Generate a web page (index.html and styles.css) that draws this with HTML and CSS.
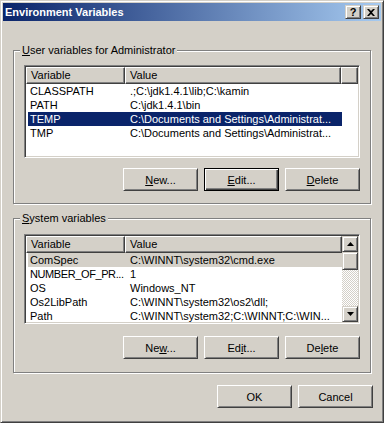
FILE: index.html
```html
<!DOCTYPE html>
<html lang="en">
<head>
  <meta charset="UTF-8">
  <title>Environment Variables</title>
  <link rel="stylesheet" href="styles.css">
</head>
<body>

<div class="window">
  <div class="titlebar">
    <span class="title">Environment Variables</span>
    <div class="caption-buttons">
      <span class="cap-btn help">?</span>
      <span class="cap-btn close">
        <svg width="8" height="7" viewBox="0 0 8 7"><path d="M0 0h2l2 2 2-2h2L5 3.5 8 7H6L4 5 2 7H0l3-3.5z" fill="#000"/></svg>
      </span>
    </div>
  </div>

  <div class="group user-group">
    <div class="group-label"><u>U</u>ser variables for Administrator</div>
    <div class="listview user-list">
      <div class="lv-main">
        <div class="lv-header">
          <div class="hd col-var">Variable</div>
          <div class="hd col-val">Value</div>
          <div class="hd col-fill"></div>
        </div>
        <div class="row"><span>CLASSPATH</span><span>.;C:\jdk1.4.1\lib;C:\kamin</span></div>
        <div class="row"><span>PATH</span><span>C:\jdk1.4.1\bin</span></div>
        <div class="row selected"><span>TEMP</span><span>C:\Documents and Settings\Administrat...</span></div>
        <div class="row"><span>TMP</span><span>C:\Documents and Settings\Administrat...</span></div>
      </div>
    </div>
    <div class="btn-row">
      <button class="btn"><u>N</u>ew...</button>
      <button class="btn default"><u>E</u>dit...</button>
      <button class="btn"><u>D</u>elete</button>
    </div>
  </div>

  <div class="group system-group">
    <div class="group-label"><u>S</u>ystem variables</div>
    <div class="listview system-list">
      <div class="lv-main">
        <div class="lv-header">
          <div class="hd col-var">Variable</div>
          <div class="hd col-val wide">Value</div>
        </div>
        <div class="row inactive"><span>ComSpec</span><span>C:\WINNT\system32\cmd.exe</span></div>
        <div class="row"><span class="tight">NUMBER_OF_PR...</span><span>1</span></div>
        <div class="row"><span>OS</span><span>Windows_NT</span></div>
        <div class="row"><span>Os2LibPath</span><span>C:\WINNT\system32\os2\dll;</span></div>
        <div class="row"><span>Path</span><span>C:\WINNT\system32;C:\WINNT;C:\WIN...</span></div>
      </div>
      <div class="scrollbar">
        <div class="sb-btn">
          <svg width="7" height="4" viewBox="0 0 7 4"><path d="M3.5 0L7 4H0z" fill="#000"/></svg>
        </div>
        <div class="sb-thumb"></div>
        <div class="sb-track"></div>
        <div class="sb-btn">
          <svg width="7" height="4" viewBox="0 0 7 4"><path d="M0 0h7L3.5 4z" fill="#000"/></svg>
        </div>
      </div>
    </div>
    <div class="btn-row">
      <button class="btn">Ne<u>w</u>...</button>
      <button class="btn">Ed<u>i</u>t...</button>
      <button class="btn">De<u>l</u>ete</button>
    </div>
  </div>

  <div class="footer">
    <button class="btn">OK</button>
    <button class="btn">Cancel</button>
  </div>
</div>

</body>
</html>
```

FILE: styles.css
```css
* { box-sizing: border-box; }
body {
  margin: 0;
  background: #d4d0c8;
  font-family: Tahoma, "Liberation Sans", sans-serif;
  font-size: 11px;
  color: #000;
}
u { text-decoration: underline; text-underline-offset: 1px; }

.window {
  width: 384px;
  height: 423px;
  background: #d4d0c8;
  border: 1px solid;
  border-color: #d4d0c8 #404040 #404040 #d4d0c8;
  box-shadow: inset 1px 1px #fff, inset -1px -1px #808080;
  padding: 2px;
}

/* title bar */
.titlebar {
  height: 18px;
  background: linear-gradient(to right, #0a246a, #a6caf0);
  display: flex;
  align-items: center;
  justify-content: space-between;
  padding: 0 2px 0 2px;
}
.title {
  color: #fff;
  font-weight: bold;
  font-size: 11px;
}
.caption-buttons { display: flex; gap: 2px; }
.cap-btn {
  width: 16px;
  height: 14px;
  display: flex;
  align-items: center;
  justify-content: center;
  background: #d4d0c8;
  border: 1px solid;
  border-color: #d4d0c8 #404040 #404040 #d4d0c8;
  box-shadow: inset 1px 1px #fff, inset -1px -1px #808080;
  font-weight: bold;
  font-size: 11px;
  line-height: 12px;
}

/* group boxes */
.group {
  margin: 29px 10px 0;
  padding: 0 10px 12px;
  border: 1px solid #808080;
  box-shadow: inset 1px 1px #fff, 1px 1px #fff;
}
.system-group { margin-top: 14px; padding-bottom: 13px; }
.group-label {
  width: fit-content;
  margin: -7px 0 0 -4px;
  padding: 0 2px;
  line-height: 13px;
  background: #d4d0c8;
}

/* list views */
.listview {
  display: flex;
  width: 336px;
  margin-top: 8px;
  background: #fff;
  border: 1px solid;
  border-color: #808080 #fff #fff #808080;
  box-shadow: inset 1px 1px #404040, inset -1px -1px #d4d0c8;
  padding: 1px;
  overflow: hidden;
}
.user-list { height: 93px; }
.system-list { height: 90px; margin-top: 9px; }
.lv-main { flex: 1; min-width: 0; }
.lv-header { display: flex; height: 17px; }
.hd {
  height: 17px;
  line-height: 14px;
  padding-left: 4px;
  background: #d4d0c8;
  border: 1px solid;
  border-color: #fff #404040 #404040 #fff;
  box-shadow: inset -1px -1px #808080;
  white-space: nowrap;
}
.col-var { width: 99px; }
.col-val { width: 216px; }
.col-val.wide { width: 217px; }
.col-fill { flex: 1; }

.row {
  display: grid;
  grid-template-columns: 97px 217px;
  width: 314px;
  height: 14px;
  line-height: 14px;
  margin-left: 2px;
  white-space: nowrap;
}
.row span { overflow: hidden; padding-left: 2px; }
.row span + span { padding-left: 5px; }
.row .tight { letter-spacing: -0.4px; }
.row.selected { background: #0a246a; color: #fff; }
.row.inactive { background: #d4d0c8; }

/* scroll bar */
.scrollbar {
  width: 16px;
  display: flex;
  flex-direction: column;
  background: repeating-conic-gradient(#fff 0 25%, #d4d0c8 0 50%) 0 0 / 2px 2px;
}
.sb-btn, .sb-thumb {
  background: #d4d0c8;
  border: 1px solid;
  border-color: #d4d0c8 #404040 #404040 #d4d0c8;
  box-shadow: inset 1px 1px #fff, inset -1px -1px #808080;
}
.sb-btn {
  height: 16px;
  display: flex;
  align-items: center;
  justify-content: center;
}
.sb-thumb { height: 18px; }
.sb-track { flex: 1; }

/* push buttons */
.btn-row {
  display: flex;
  justify-content: flex-end;
  gap: 6px;
  width: 336px;
  margin-top: 10px;
}
.system-group .btn-row { margin-top: 12px; }
.btn {
  width: 75px;
  height: 23px;
  padding: 0;
  font: inherit;
  color: #000;
  background: #d4d0c8;
  border: 1px solid;
  border-color: #fff #404040 #404040 #fff;
  box-shadow: inset 1px 1px #d4d0c8, inset -1px -1px #808080;
}
.btn.default {
  border-color: #000;
  box-shadow: inset 1px 1px #fff, inset -1px -1px #404040, inset -2px -2px #808080;
}

.footer {
  display: flex;
  justify-content: flex-end;
  gap: 6px;
  margin-top: 12px;
  padding-right: 8px;
}
```
